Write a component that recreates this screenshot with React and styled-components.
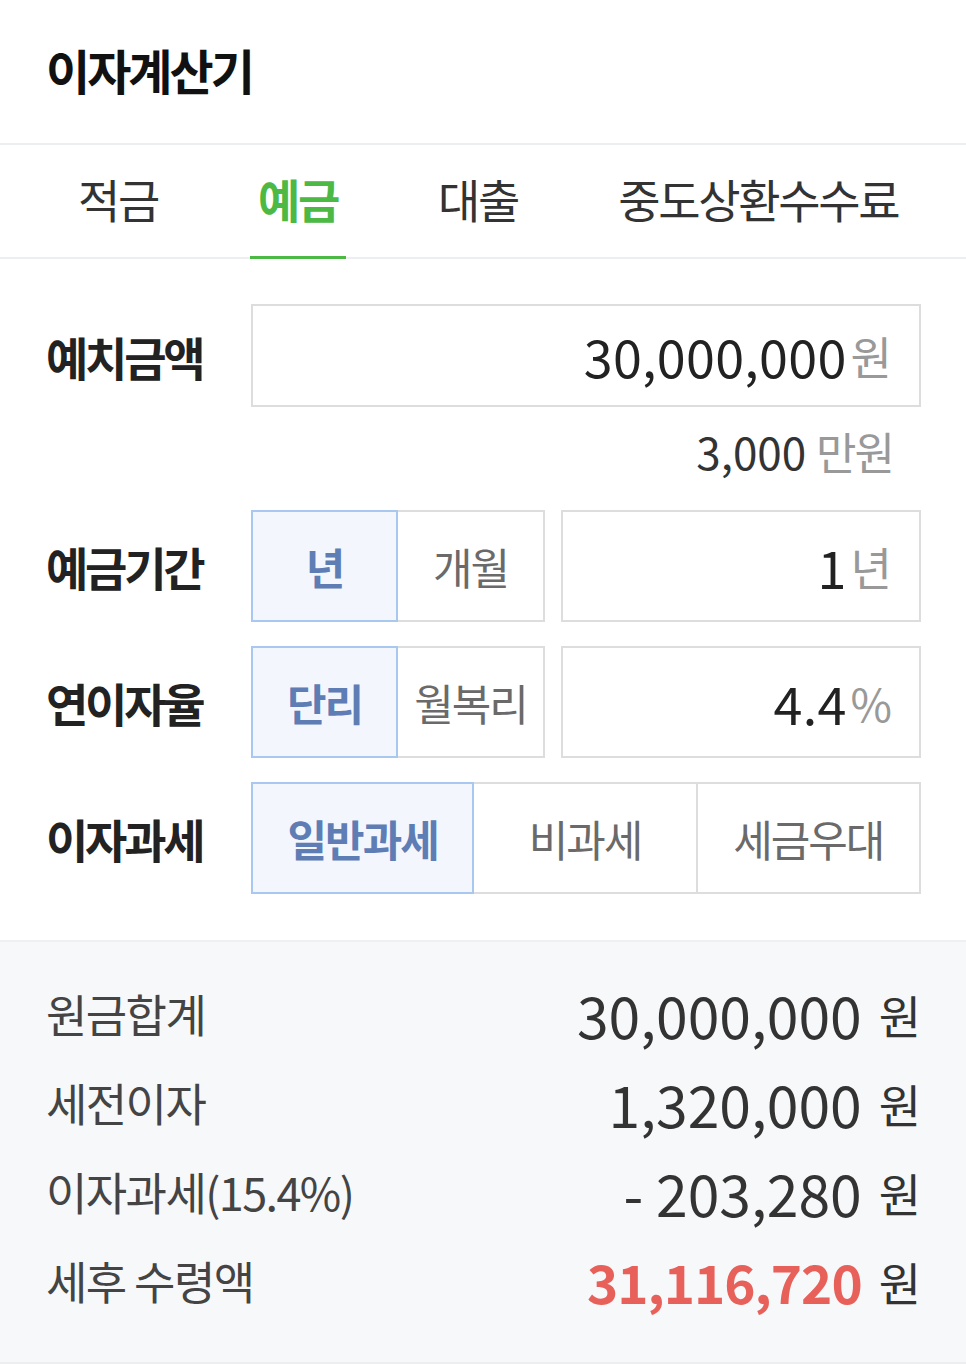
import React, { useState } from "react";
import styled, { createGlobalStyle } from "styled-components";

const tabs = ["적금", "예금", "대출", "중도상환수수료"];

const results = [
  { label: "원금합계", value: "30,000,000" },
  { label: "세전이자", value: "1,320,000" },
  { label: "이자과세(15.4%)", value: "- 203,280" },
  { label: "세후 수령액", value: "31,116,720", total: true },
];

function App() {
  const [tab, setTab] = useState(1);
  const [period, setPeriod] = useState(0);
  const [rateType, setRateType] = useState(0);
  const [tax, setTax] = useState(0);

  return (
    <Page>
      <GlobalStyle />
      <Header>
        <Title>이자계산기</Title>
      </Header>
      <TabBar>
        {tabs.map((t, i) => (
          <Tab key={t} $active={i === tab} onClick={() => setTab(i)}>
            {t}
          </Tab>
        ))}
      </TabBar>

      <Form>
        <Row>
          <Label>예치금액</Label>
          <InputBox>
            <Value>30,000,000</Value>
            <Unit>원</Unit>
          </InputBox>
        </Row>
        <Note>
          3,000 <NoteUnit>만원</NoteUnit>
        </Note>

        <Row>
          <Label>예금기간</Label>
          <Segment $cols={2}>
            {["년", "개월"].map((s, i) => (
              <SegButton key={s} $active={i === period} onClick={() => setPeriod(i)}>
                {s}
              </SegButton>
            ))}
          </Segment>
          <SmallInput>
            <Value>1</Value>
            <Unit>년</Unit>
          </SmallInput>
        </Row>

        <Row>
          <Label>연이자율</Label>
          <Segment $cols={2}>
            {["단리", "월복리"].map((s, i) => (
              <SegButton key={s} $active={i === rateType} onClick={() => setRateType(i)}>
                {s}
              </SegButton>
            ))}
          </Segment>
          <SmallInput>
            <Value>4.4</Value>
            <Unit>%</Unit>
          </SmallInput>
        </Row>

        <Row>
          <Label>이자과세</Label>
          <Segment $cols={3} $wide>
            {["일반과세", "비과세", "세금우대"].map((s, i) => (
              <SegButton key={s} $active={i === tax} onClick={() => setTax(i)}>
                {s}
              </SegButton>
            ))}
          </Segment>
        </Row>
      </Form>

      <Results>
        {results.map((r) => (
          <ResultRow key={r.label}>
            <ResultLabel>{r.label}</ResultLabel>
            <ResultValue>
              <Amount $total={r.total}>{r.value}</Amount>
              <Won>원</Won>
            </ResultValue>
          </ResultRow>
        ))}
      </Results>
    </Page>
  );
}

export default App;

const GlobalStyle = createGlobalStyle`
  body {
    margin: 0;
    background: #ffffff;
    font-family: "Noto Sans CJK KR", "Noto Sans", sans-serif;
  }
`;

const Page = styled.div`
  width: 966px;
  background: #fff;
`;

const Header = styled.header`
  height: 145px;
  box-sizing: border-box;
  display: flex;
  align-items: center;
  padding: 0 0 6px 46px;
  border-bottom: 2px solid #eceef1;
`;

const Title = styled.h1`
  margin: 0;
  font-size: 48px;
  font-weight: 700;
  letter-spacing: -3px;
  color: #111;
`;

const TabBar = styled.nav`
  display: flex;
  height: 112px;
  padding-left: 70px;
  gap: 84px;
  border-bottom: 2px solid #eceef1;
`;

const Tab = styled.div`
  display: flex;
  align-items: center;
  padding: 0 8px 6px;
  margin-bottom: -2px;
  font-size: 46px;
  letter-spacing: -2.3px;
  cursor: pointer;
  color: ${(p) => (p.$active ? "#4cb944" : "#333")};
  font-weight: ${(p) => (p.$active ? 700 : 400)};
  border-bottom: 3px solid ${(p) => (p.$active ? "#4cb944" : "transparent")};
`;

const Form = styled.section`
  padding: 45px 45px 46px 46px;
  display: flex;
  flex-direction: column;
  gap: 24px;
`;

const Row = styled.div`
  display: flex;
  align-items: center;
  gap: 16px;
`;

const Label = styled.div`
  width: 189px;
  flex: none;
  font-size: 46px;
  font-weight: 700;
  letter-spacing: -3.2px;
  color: #222;
`;

const InputBox = styled.div`
  flex: 1;
  height: 103px;
  box-sizing: border-box;
  border: 2px solid #dddddd;
  display: flex;
  align-items: center;
  justify-content: flex-end;
  padding-right: 29px;
  gap: 4px;
`;

const SmallInput = styled(InputBox)`
  height: 112px;
`;

const Value = styled.span`
  font-size: 52px;
  color: #222;
  letter-spacing: 0.3px;
`;

const Unit = styled.span`
  font-size: 45px;
  color: #999;
  letter-spacing: -2px;
`;

const Note = styled.div`
  text-align: right;
  padding-right: 28px;
  margin-bottom: 15px;
  line-height: 40px;
  font-size: 44px;
  color: #333;
`;

const NoteUnit = styled.span`
  color: #999;
  letter-spacing: -2px;
`;

const Segment = styled.div`
  display: grid;
  grid-template-columns: repeat(${(p) => p.$cols}, 1fr);
  width: ${(p) => (p.$wide ? "670px" : "294px")};
  height: 112px;
  flex: none;
`;

const SegButton = styled.div`
  display: flex;
  align-items: center;
  justify-content: center;
  box-sizing: border-box;
  border: 2px solid ${(p) => (p.$active ? "#a8c8f0" : "#dddddd")};
  margin-left: -2px;
  position: relative;
  z-index: ${(p) => (p.$active ? 1 : 0)};
  background: ${(p) => (p.$active ? "#f3f7fd" : "#fff")};
  color: ${(p) => (p.$active ? "#5f7db5" : "#6a6a6a")};
  font-weight: ${(p) => (p.$active ? 700 : 400)};
  font-size: 43px;
  letter-spacing: -2px;
  cursor: pointer;

  &:first-child {
    margin-left: 0;
  }
`;

const Results = styled.section`
  background: #f7f8fa;
  border-top: 2px solid #eef0f2;
  border-bottom: 2px solid #eceef0;
  padding: 27px 45px 37px 46px;
`;

const ResultRow = styled.div`
  height: 89px;
  display: flex;
  align-items: center;
  justify-content: space-between;
`;

const ResultLabel = styled.div`
  font-size: 45px;
  color: #444;
  letter-spacing: -1.6px;
`;

const ResultValue = styled.div`
  display: flex;
  align-items: center;
  gap: 17px;
`;

const Amount = styled.span`
  font-size: ${(p) => (p.$total ? "53px" : "57px")};
  color: ${(p) => (p.$total ? "#e8605a" : "#333")};
  font-weight: ${(p) => (p.$total ? 700 : 400)};
  letter-spacing: ${(p) => (p.$total ? "-1px" : "0")};
`;

const Won = styled.span`
  font-size: 46px;
  color: #333;
`;
